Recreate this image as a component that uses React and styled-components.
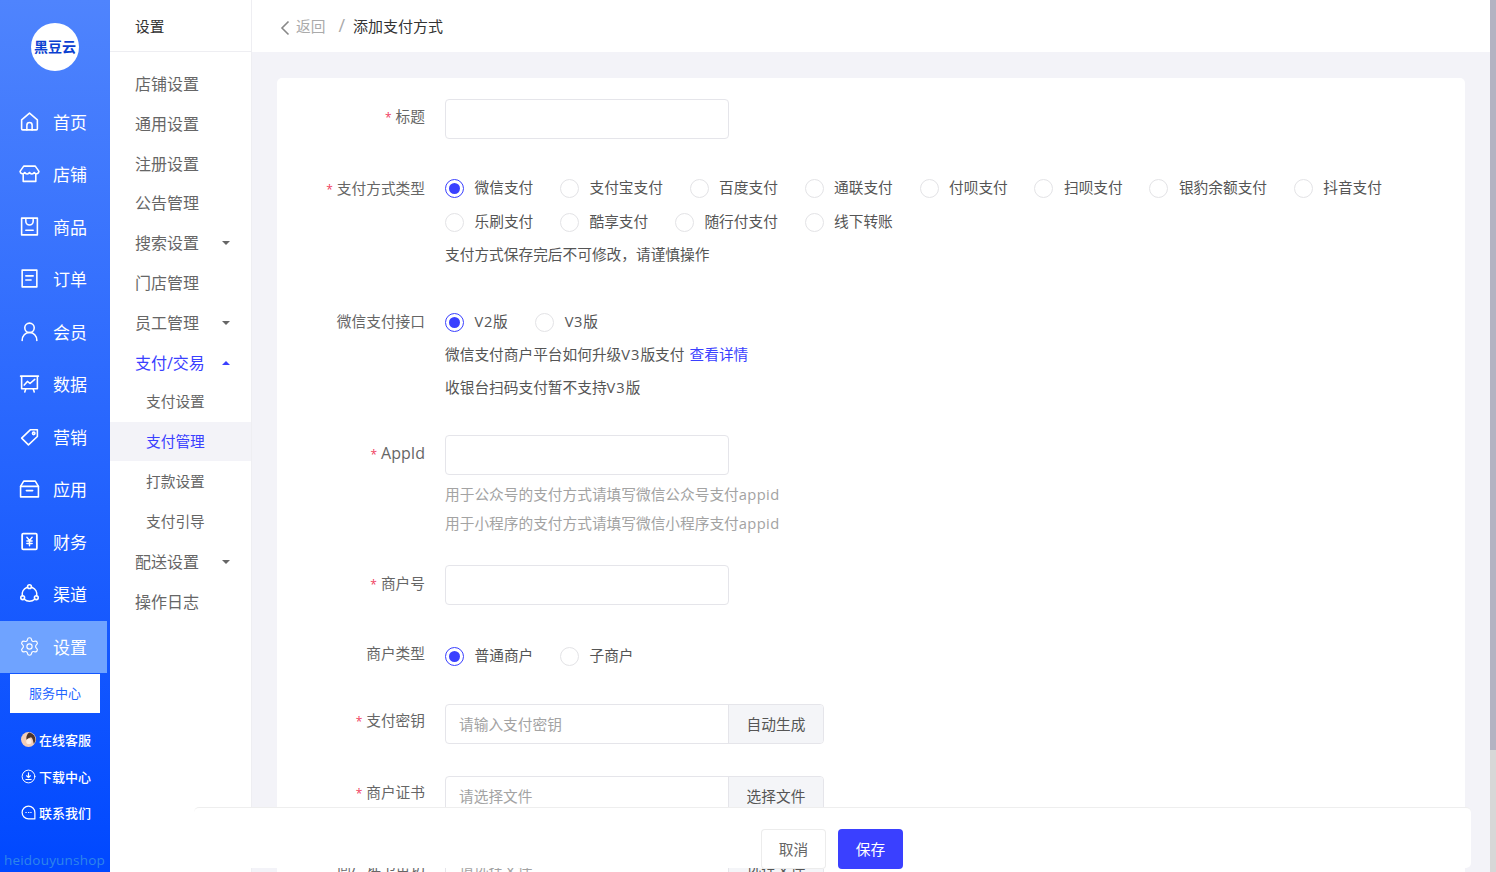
import React from "react";
import styled, { createGlobalStyle } from "styled-components";
import { Settings } from "lucide-react";

const GlobalStyle = createGlobalStyle`
    html, body {
        margin : 0;
        padding : 0;
        height : 100%;
        overflow : hidden;
        background : #f3f3f8;
    }
    body {
        font-family : "Open Sans", "Noto Sans CJK SC", sans-serif;
        font-size : 14.7px;
        color : #555;
    }
    * {
        box-sizing : border-box;
    }
`;

const ACTIVE = "#3a40ff";

const Page = styled.div`
    position : relative;
    display : flex;
    width : 1496px;
    height : 872px;
    overflow : hidden;
`;

/* left blue column */
const Sidebar = styled.aside`
    width : 110px;
    flex : none;
    display : flex;
    flex-direction : column;
    padding-top : 23px;
    background : linear-gradient(180deg, #4f84fd 0%, #0048ff 100%);
    color : #fff;
`;

const Logo = styled.div`
    width : 48px;
    height : 48px;
    margin : 0 0 24.5px 31px;
    padding-bottom : 2px;
    border-radius : 50%;
    background : #fff;
    display : flex;
    align-items : center;
    justify-content : center;
    font-size : 14px;
    font-weight : 700;
    color : #0b3fd0;
`;

const NavItem = styled.div`
    width : ${(p) => (p.$active ? "107px" : "110px")};
    height : 52.5px;
    display : flex;
    align-items : center;
    gap : 13px;
    padding : 0 0 1px 19px;
    font-size : 17px;
    background : ${(p) => (p.$active ? "#6fa3ff" : "transparent")};

    svg {
        width : 21px;
        height : 21px;
        flex : none;
    }
`;

const ServiceBox = styled.div`
    width : 90px;
    height : 39px;
    margin : 1px 0 9.5px 10px;
    padding-bottom : 3px;
    background : #fff;
    color : #1f66ff;
    font-size : 13px;
    display : flex;
    align-items : center;
    justify-content : center;
`;

const FootLink = styled.div`
    height : 36.4px;
    display : flex;
    align-items : center;
    gap : 3px;
    padding : 0 0 2px 21px;
    font-size : 13px;
    font-weight : 500;

    svg {
        width : 15px;
        height : 15px;
        flex : none;
    }
`;

const Brand = styled.div`
    margin-top : auto;
    padding : 0 0 3px 4px;
    font-size : 13.5px;
    letter-spacing : 0.2px;
    white-space : nowrap;
    color : #2f86ea;
`;

/* second column */
const SubMenu = styled.nav`
    width : 142px;
    flex : none;
    background : #fff;
    border-right : 1px solid #eeeef2;
`;

const SubTitle = styled.div`
    height : 52px;
    padding-left : 25px;
    line-height : 53px;
    font-size : 14.7px;
    color : #333;
    border-bottom : 1px solid #eeeef2;
    margin-bottom : 11px;
`;

const SubItem = styled.div`
    height : 39.85px;
    display : flex;
    align-items : center;
    justify-content : space-between;
    padding : 0 21px ${(p) => (p.$nested ? "2px" : "0")} ${(p) => (p.$nested ? "36px" : "25px")};
    font-size : ${(p) => (p.$nested ? "14.7px" : "16px")};
    color : ${(p) => (p.$on ? ACTIVE : "#666")};
    background : ${(p) => (p.$current ? "#f3f3f8" : "transparent")};
`;

const Caret = styled.i`
    width : 0;
    height : 0;
    margin-top : 2px;
    border-left : 4.5px solid transparent;
    border-right : 4.5px solid transparent;
    ${(p) =>
        p.$up
            ? `border-bottom : 4.5px solid ${ACTIVE};`
            : "border-top : 4.5px solid #666;"}
`;

/* main area */
const Main = styled.main`
    flex : 1;
    min-width : 0;
    overflow : hidden;
`;

const TopBar = styled.header`
    height : 52px;
    background : #fff;
    display : flex;
    align-items : center;
    padding : 0 0 2px 28px;
    font-size : 14.7px;
`;

const Back = styled.span`
    display : flex;
    align-items : center;
    gap : 6px;
    color : #aaa;

    svg {
        width : 10px;
        height : 16px;
        margin-top : 6px;
    }
`;

const Slash = styled.span`
    margin : 0 8px 0 13px;
    font-size : 18px;
    line-height : 20px;
    color : #aaa;
`;

const Crumb = styled.span`
    font-size : 15px;
    color : #333;
`;

const Card = styled.section`
    margin : 26px 25px 0 25px;
    padding : 21px 0 0;
    background : #fff;
    border-radius : 5px;
`;

const Row = styled.div`
    display : grid;
    grid-template-columns : 148px 1fr;
    column-gap : 20px;
    margin-bottom : ${(p) => p.$gap}px;
`;

const Label = styled.label`
    text-align : right;
    line-height : 34px;
    font-size : ${(p) => p.$size || 14.7}px;
    color : #666;
    margin-top : ${(p) => p.$shift || 0}px;
`;

const Star = styled.span`
    color : #f0405f;
    font-size : 12px;
    margin-right : 4px;
`;

const TextInput = styled.div`
    width : 284px;
    height : 40px;
    border : 1px solid #e5e5ea;
    border-radius : 4px;
    background : #fff;
`;

const InputGroup = styled.div`
    display : flex;
    width : 379px;
    height : 40px;
    border : 1px solid #e5e5ea;
    border-radius : 4px;
    overflow : hidden;
`;

const GroupField = styled.div`
    width : 282px;
    flex : none;
    padding-left : 13px;
    line-height : 39px;
    color : #a3a3a3;
`;

const GroupButton = styled.div`
    flex : 1;
    border-left : 1px solid #e5e5ea;
    background : #f4f5f8;
    text-align : center;
    line-height : 39px;
    color : #555;
`;

const RadioLine = styled.div`
    min-height : 34px;
    display : flex;
    flex-wrap : wrap;
`;

const RadioOption = styled.div`
    height : 34px;
    display : flex;
    align-items : center;
    gap : 10.5px;
    margin-right : 26.7px;
    color : #555;
`;

const RadioText = styled.span`
    line-height : 20px;
    margin-bottom : 2px;
    letter-spacing : ${(p) => (p.$wide ? "0.7px" : "0")};
`;

const RadioDot = styled.span`
    width : 19px;
    height : 19px;
    flex : none;
    border-radius : 50%;
    border : 1px solid ${(p) => (p.$checked ? ACTIVE : "#e3e3e6")};
    display : flex;
    align-items : center;
    justify-content : center;

    &::after {
        content : "";
        width : 11px;
        height : 11px;
        border-radius : 50%;
        background : ${(p) => (p.$checked ? ACTIVE : "transparent")};
    }
`;

const Note = styled.div`
    line-height : 31px;
    padding-bottom : 2px;
    color : #555;
`;

const Latin = styled.span`
    letter-spacing : ${(p) => p.$spacing}px;
`;

const Help = styled.div`
    line-height : 29px;
    color : #a3a3a3;
`;

const HelpBox = styled.div`
    padding-top : 5px;
`;

const DetailLink = styled.a`
    color : ${ACTIVE};
    margin-left : 5px;
`;

/* fixed save bar, lies over the page */
const SaveBar = styled.div`
    position : absolute;
    left : 194px;
    top : 807px;
    width : 1277px;
    height : 61px;
    padding : 21px 1px 0 0;
    display : flex;
    justify-content : center;
    gap : 12px;
    background : #fff;
    border-top : 1px solid #eeeeee;
    border-radius : 5px;
`;

const BarButton = styled.div`
    width : 65px;
    height : 40px;
    border-radius : 4px;
    text-align : center;
    line-height : 41px;
    color : ${(p) => (p.$primary ? "#fff" : "#666")};
    background : ${(p) => (p.$primary ? ACTIVE : "#fff")};
    box-shadow : ${(p) => (p.$primary ? "none" : "inset 0 0 0 1px #ececec")};
`;

const ScrollTrack = styled.div`
    width : 6px;
    flex : none;
    background : #d7d7d7;
`;

const ScrollThumb = styled.div`
    height : 750px;
    background : #b3b3c2;
`;

const Stroke = ({ children }) => (
    <svg viewBox="0 0 20 20" fill="none" stroke="#fff" strokeWidth="1.5" strokeLinejoin="round" strokeLinecap="round">
        {children}
    </svg>
);

const icons = {
    home: (
        <Stroke>
            <path d="M2.5 8.5 10 2l7.5 6.5V17a1 1 0 0 1-1 1h-13a1 1 0 0 1-1-1Z" />
            <path d="M7.5 18v-4.5a2.5 2.5 0 0 1 5 0V18" />
        </Stroke>
    ),
    store: (
        <Stroke>
            <path d="M4.5 3h11L19 8a2.4 2.4 0 0 1-4.5 1 2.5 2.5 0 0 1-4.500 0 2.500 2.500 0 0 1-4.500 0A2.400 2.400 0 0 1 1 8Z" />
            <path d="M4 11v6.5h12V11" />
        </Stroke>
    ),
    goods: (
        <Stroke>
            <rect x="2.5" y="2" width="15" height="16" />
            <path d="M6.5 3v2a3.5 3.5 0 0 0 7 0V3" />
            <path d="M6.5 13.5h7" />
        </Stroke>
    ),
    order: (
        <Stroke>
            <rect x="3" y="2" width="14" height="16" />
            <path d="M6.5 7.5h7M6.5 11.5h5" />
        </Stroke>
    ),
    member: (
        <Stroke>
            <circle cx="10" cy="6.5" r="4.5" />
            <path d="M3 18.5c0-4.5 3-7.5 7-7.5s7 3 7 7.5" />
        </Stroke>
    ),
    data: (
        <Stroke>
            <path d="M1.5 3h17M2.5 3v12h15V3" />
            <path d="m5 11.5 3-3.5 2.5 2L15 6" />
            <path d="m6.5 15-1 3M13.5 15l1 3" />
        </Stroke>
    ),
    tag: (
        <Stroke>
            <path d="M11 3.5h6.5V10L9 18 2.5 11.5Z" />
            <circle cx="14" cy="7" r="1.2" />
        </Stroke>
    ),
    app: (
        <Stroke>
            <path d="M1.5 8 4.5 3h11l3 5" />
            <rect x="1.5" y="8" width="17" height="10" />
            <path d="M7 12h6" />
        </Stroke>
    ),
    finance: (
        <Stroke>
            <rect x="3" y="2.5" width="14" height="15" rx="1" strokeWidth="1.7" />
            <path d="m7.5 6 2.5 3 2.5-3M10 9v5M7.5 9.5h5M7.5 12h5" strokeWidth="1.4" />
        </Stroke>
    ),
    channel: (
        <Stroke>
            <path d="M7.5 4.3a7 7 0 0 0-4.3 8M12.5 4.3a7 7 0 0 1 4.3 8M5 15.5a7.5 7.5 0 0 0 10 0" />
            <circle cx="10" cy="3.5" r="1.8" />
            <circle cx="3.5" cy="14" r="1.8" />
            <circle cx="16.5" cy="14" r="1.8" />
        </Stroke>
    ),
    settings: <Settings color="#fff" strokeWidth={1.3} />,
    download: (
        <Stroke>
            <circle cx="10" cy="10" r="8.5" strokeWidth="1.3" />
            <path d="M10 5v6M7.5 9l2.5 2.5L12.5 9M6.5 14h7" strokeWidth="1.5" />
        </Stroke>
    ),
    chat: (
        <Stroke>
            <path d="M18.5 18.5H10a8.5 8.5 0 1 1 8.5-8.5Z" strokeWidth="1.6" />
            <path d="M6.5 10h.5M10 10h.5M13 10h.5" strokeWidth="1.6" />
        </Stroke>
    ),
    avatar: (
        <svg viewBox="0 0 20 20">
            <circle cx="10" cy="10" r="10" fill="#f3cdb6" />
            <path d="M11 .5a9.500 9.500 0 0 1 8 11c-.5 2-1 3-2 4-1-3-1-7-3.500-8.500-2.500 1-5 1.500-6 3.500-1-3 0-8 3.500-10Z" fill="#4a342c" />
            <circle cx="10.5" cy="12.5" r="3.5" fill="#fff0e6" />
        </svg>
    ),
};

const navItems = [
    ["home", "首页"],
    ["store", "店铺"],
    ["goods", "商品"],
    ["order", "订单"],
    ["member", "会员"],
    ["data", "数据"],
    ["tag", "营销"],
    ["app", "应用"],
    ["finance", "财务"],
    ["channel", "渠道"],
    ["settings", "设置"],
];

const subItems = [
    { text: "店铺设置" },
    { text: "通用设置" },
    { text: "注册设置" },
    { text: "公告管理" },
    { text: "搜索设置", caret: true },
    { text: "门店管理" },
    { text: "员工管理", caret: true },
    { text: "支付/交易", on: true, up: true },
    { text: "支付设置", nested: true },
    { text: "支付管理", nested: true, on: true, current: true },
    { text: "打款设置", nested: true },
    { text: "支付引导", nested: true },
    { text: "配送设置", caret: true },
    { text: "操作日志" },
];

const payTypes = [
    "微信支付", "支付宝支付", "百度支付", "通联支付", "付呗支付", "扫呗支付",
    "银豹余额支付", "抖音支付", "乐刷支付", "酷享支付", "随行付支付", "线下转账",
];

const Radio = ({ checked, wide, children }) => (
    <RadioOption>
        <RadioDot $checked={checked} />
        <RadioText $wide={wide}>{children}</RadioText>
    </RadioOption>
);

const App = () => {
    return (
        <Page>
            <GlobalStyle />
            <Sidebar>
                <Logo>黑豆云</Logo>
                {navItems.map(([icon, text]) => (
                    <NavItem key={text} $active={text === "设置"}>
                        {icons[icon]}
                        {text}
                    </NavItem>
                ))}
                <ServiceBox>服务中心</ServiceBox>
                <FootLink>{icons.avatar}在线客服</FootLink>
                <FootLink>{icons.download}下载中心</FootLink>
                <FootLink>{icons.chat}联系我们</FootLink>
                <Brand>heidouyunshop</Brand>
            </Sidebar>

            <SubMenu>
                <SubTitle>设置</SubTitle>
                {subItems.map((item) => (
                    <SubItem key={item.text} $nested={item.nested} $on={item.on} $current={item.current}>
                        {item.text}
                        {item.caret && <Caret />}
                        {item.up && <Caret $up />}
                    </SubItem>
                ))}
            </SubMenu>

            <Main>
                <TopBar>
                    <Back>
                        <svg viewBox="0 0 10 16" fill="none" stroke="#888" strokeWidth="1.6">
                            <path d="M8.5 1.5 2 8l6.5 6.5" />
                        </svg>
                        返回
                    </Back>
                    <Slash>/</Slash>
                    <Crumb>添加支付方式</Crumb>
                </TopBar>

                <Card>
                    <Row $gap={32}>
                        <Label><Star>*</Star>标题</Label>
                        <TextInput />
                    </Row>

                    <Row $gap={33}>
                        <Label><Star>*</Star>支付方式类型</Label>
                        <div>
                            <RadioLine>
                                {payTypes.map((name, i) => (
                                    <Radio key={name} checked={i === 0}>{name}</Radio>
                                ))}
                            </RadioLine>
                            <Note>支付方式保存完后不可修改，请谨慎操作</Note>
                        </div>
                    </Row>

                    <Row $gap={30}>
                        <Label $shift={-1}>微信支付接口</Label>
                        <div>
                            <RadioLine>
                                <Radio checked wide>V2版</Radio>
                                <Radio wide>V3版</Radio>
                            </RadioLine>
                            <Note>微信支付商户平台如何升级<Latin $spacing={1}>V3</Latin>版支付<DetailLink>查看详情</DetailLink></Note>
                            <Note>收银台扫码支付暂不支持<Latin $spacing={1}>V3</Latin>版</Note>
                        </div>
                    </Row>

                    <Row $gap={27}>
                        <Label $shift={1} $size={16}><Star>*</Star>AppId</Label>
                        <div>
                            <TextInput />
                            <HelpBox>
                                <Help>用于公众号的支付方式请填写微信公众号支付<Latin $spacing={0.4}>appid</Latin></Help>
                                <Help>用于小程序的支付方式请填写微信小程序支付<Latin $spacing={0.4}>appid</Latin></Help>
                            </HelpBox>
                        </div>
                    </Row>

                    <Row $gap={34}>
                        <Label $shift={1}><Star>*</Star>商户号</Label>
                        <TextInput />
                    </Row>

                    <Row $gap={31}>
                        <Label $shift={-3}>商户类型</Label>
                        <RadioLine>
                            <Radio checked>普通商户</Radio>
                            <Radio>子商户</Radio>
                        </RadioLine>
                    </Row>

                    <Row $gap={32}>
                        <Label $shift={-1}><Star>*</Star>支付密钥</Label>
                        <InputGroup>
                            <GroupField>请输入支付密钥</GroupField>
                            <GroupButton>自动生成</GroupButton>
                        </InputGroup>
                    </Row>

                    <Row $gap={32}>
                        <Label $shift={-1}><Star>*</Star>商户证书</Label>
                        <InputGroup>
                            <GroupField>请选择文件</GroupField>
                            <GroupButton>选择文件</GroupButton>
                        </InputGroup>
                    </Row>

                    <Row $gap={32}>
                        <Label>商户证书密钥</Label>
                        <InputGroup>
                            <GroupField>请选择文件</GroupField>
                            <GroupButton>选择文件</GroupButton>
                        </InputGroup>
                    </Row>
                </Card>
            </Main>

            <ScrollTrack>
                <ScrollThumb />
            </ScrollTrack>

            <SaveBar>
                <BarButton>取消</BarButton>
                <BarButton $primary>保存</BarButton>
            </SaveBar>
        </Page>
    );
};

export default App;
